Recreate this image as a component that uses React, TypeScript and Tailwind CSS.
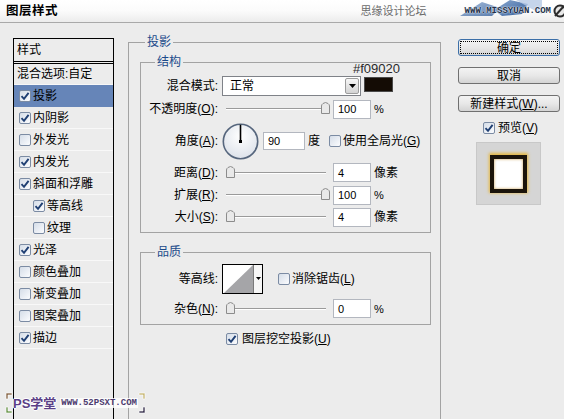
import React from 'react';

// Photoshop "图层样式" dialog

const styleRows: { t: string; on?: boolean; sel?: boolean; sub?: boolean }[] = [
  { t: '投影', on: true, sel: true },
  { t: '内阴影', on: true },
  { t: '外发光' },
  { t: '内发光', on: true },
  { t: '斜面和浮雕', on: true },
  { t: '等高线', on: true, sub: true },
  { t: '纹理', sub: true },
  { t: '光泽', on: true },
  { t: '颜色叠加' },
  { t: '渐变叠加' },
  { t: '图案叠加' },
  { t: '描边', on: true },
];

function Check({ on }: { on?: boolean }) {
  return (
    <span className="flex h-[12px] w-[12px] shrink-0 items-center justify-center rounded-[2px] border border-[#7b8ba3] bg-gradient-to-br from-[#d5dde8] to-[#fbfcfe]">
      {on && (
        <svg width="10" height="10" viewBox="0 0 10 10">
          <path d="M1.5 5.2 L4 7.8 L8.6 1.8" fill="none" stroke="#1f3f73" strokeWidth="1.9" />
        </svg>
      )}
    </span>
  );
}

function Slider({ value }: { value: number }) {
  const x = 8.5 + (95 * value) / 100;
  return (
    <svg width="108" height="16" viewBox="0 0 108 16" className="ml-[4px] shrink-0">
      <line x1="4" y1="7.5" x2="104" y2="7.5" stroke="#9a9a9a" />
      <line x1="4" y1="8.5" x2="104" y2="8.5" stroke="#ffffff" />
      <path
        d={`M${x - 4} 12.5 V5 Q${x - 4} 3.5 ${x - 2.5} 2.5 L${x} 1.5 L${x + 2.5} 2.5 Q${x + 4} 3.5 ${x + 4} 5 V12.5 Z`}
        fill="#e9e9e9"
        stroke="#8c8c8c"
      />
    </svg>
  );
}

function Field({ v, wide }: { v: string; wide?: boolean }) {
  return (
    <div
      className={`flex shrink-0 items-center border border-[#b3b7bf] bg-white pl-[4px] font-['Liberation_Sans',sans-serif] text-[11px] ${
        wide ? 'ml-[4px] h-[18px] w-[42px]' : 'ml-[3px] h-[19px] w-[38px]'
      }`}
    >
      {v}
    </div>
  );
}

function Label({ children }: { children: React.ReactNode }) {
  return <span className="w-[77px] shrink-0 text-right">{children}</span>;
}

function SliderRow({ label, value, text, unit, h }: { label: React.ReactNode; value: number; text: string; unit: string; h: string }) {
  return (
    <div className={`flex items-center ${h}`}>
      <Label>{label}</Label>
      <Slider value={value} />
      <Field v={text} />
      <span className={`ml-[3px] ${unit === '%' ? "font-['Liberation_Sans',sans-serif] text-[11px]" : ''}`}>{unit}</span>
    </div>
  );
}

function Btn({ children, focus }: { children: React.ReactNode; focus?: boolean }) {
  return (
    <div
      className={`flex h-[17px] w-[102px] items-center justify-center rounded-[3px] border bg-gradient-to-b from-[#f3f3f3] via-[#e8e8e8] to-[#d4d4d4] leading-none ${
        focus ? 'border-[#3c6fa8] outline outline-1 outline-dotted outline-black outline-offset-[-3px]' : 'border-[#707070]'
      }`}
    >
      {children}
    </div>
  );
}

export default function App() {
  return (
    <div className="relative h-[419px] w-[564px] overflow-hidden bg-[#ececec] font-['Liberation_Sans','Noto_Sans_CJK_SC',sans-serif] text-[12px] leading-[16px] text-black">
      {/* Title bar */}
      <div className="relative flex h-[23px] items-center border-b border-[#a9a9a9] bg-gradient-to-b from-white via-[#fbfbfb] to-[#ececec] pl-[6px]">
        <span className="text-[12.5px] font-bold leading-none tracking-[0.5px]">图层样式</span>
        <svg className="absolute right-[22px] top-0" width="86" height="22" viewBox="0 0 86 22">
          <defs>
            <linearGradient id="sky" x1="0" y1="0" x2="1" y2="1">
              <stop offset="0" stopColor="#8eabd2" />
              <stop offset="1" stopColor="#2f5b98" />
            </linearGradient>
          </defs>
          <path d="M4 16 L26 2 L44 8 L36 16 Z" fill="url(#sky)" opacity="0.8" />
          <path d="M38 10 L54 0 L72 4 L66 14 L46 16 Z" fill="url(#sky)" />
          <path d="M60 0 L86 0 L86 14 L74 8 Z" fill="#b7cbe6" opacity="0.8" />
        </svg>
        <div className="relative ml-auto flex items-center">
          <span className="text-[11px] leading-none text-[#6b6b6b]">思缘设计论坛</span>
          <span className="ml-[38px] font-['Liberation_Mono',monospace] text-[9px] font-bold leading-none text-[#24324a] [text-shadow:0_0_2px_#fff,0_0_1px_#fff]">
            WWW.MISSYUAN.COM
          </span>
          <svg className="ml-[1px]" width="12" height="16" viewBox="0 0 12 16">
            <circle cx="8" cy="8" r="5.5" fill="#e8e8e8" stroke="#2b2b2b" strokeWidth="2" />
            <line x1="3" y1="13" x2="12" y2="3" stroke="#2b2b2b" strokeWidth="2" />
          </svg>
        </div>
      </div>

      <div className="flex">
        {/* Style list */}
        <div className="ml-[13px] mt-[15px] h-[400px] w-[101px] shrink-0 border-x border-t border-black">
          <div className="flex h-[25px] items-center border-b-[3px] border-double border-black pl-[3px]">样式</div>
          <div className="flex h-[21px] items-center border-b border-[#f7f7f7] pl-[3px]">混合选项:自定</div>
          {styleRows.map((r) => (
            <div
              key={r.t}
              className={`flex h-[22px] items-center border-b ${r.sel ? 'border-[#6685b8] bg-[#6685b8]' : 'border-[#f8f8f8]'} ${
                r.sub ? 'pl-[19px]' : 'pl-[5px]'
              }`}
            >
              <Check on={r.on} />
              <span className="ml-[2px]">{r.t}</span>
            </div>
          ))}
        </div>

        {/* Drop shadow settings */}
        <fieldset className="ml-[14px] mt-[11px] h-[400px] w-[313px] shrink-0 border border-[#a3a3a3] pl-[11px] pr-[9px]">
          <legend className="ml-[5px] px-[2px] leading-[16px] text-[#1b4a8a]">投影</legend>

          <fieldset className="mt-[4px] border border-[#a3a3a3] pb-[4px] pt-[6px]">
            <legend className="ml-[14px] px-[2px] leading-[16px] text-[#1b4a8a]">结构</legend>

            <div className="flex h-[21px] items-start">
              <span className="mt-[2px] w-[77px] shrink-0 text-right">混合模式:</span>
              <div className="ml-[4px] flex h-[20px] w-[139px] items-center border border-[#7f8288] bg-white">
                <span className="flex-1 pl-[7px]">正常</span>
                <div className="mr-[1px] flex h-[16px] w-[14px] items-center justify-center rounded-[2px] border border-[#9c9c9c] bg-gradient-to-b from-[#f7f7f7] to-[#d3d3d3]">
                  <svg width="7" height="4" viewBox="0 0 7 4">
                    <path d="M0 0 H7 L3.5 4 Z" fill="#000" />
                  </svg>
                </div>
              </div>
              <div className="ml-[3px] mt-[1px] h-[15px] w-[29px] border border-[#4a4a4a] bg-[#140c05]" />
            </div>

            <SliderRow label={<>不透明度(<u>O</u>):</>} value={100} text="100" unit="%" h="h-[24px]" />

            <div className="flex h-[40px] items-center">
              <Label>
                角度(<u>A</u>):
              </Label>
              <svg className="ml-[4px] shrink-0" width="37" height="37" viewBox="0 0 37 37">
                <defs>
                  <radialGradient id="dial" cx="50%" cy="35%" r="65%">
                    <stop offset="0" stopColor="#ffffff" />
                    <stop offset="1" stopColor="#dde2ea" />
                  </radialGradient>
                </defs>
                <circle cx="18.5" cy="18.5" r="17.2" fill="url(#dial)" stroke="#56667d" strokeWidth="1.6" />
                <line x1="18.5" y1="18.5" x2="18.5" y2="1.8" stroke="#000" strokeWidth="1.6" />
                <rect x="17" y="17" width="3" height="3" fill="#000" />
              </svg>
              <Field v="90" wide />
              <span className="ml-[3px]">度</span>
              <span className="ml-[9px]">
                <Check />
              </span>
              <span className="ml-[2px]">
                使用全局光(<u>G</u>)
              </span>
            </div>

            <SliderRow label={<>距离(<u>D</u>):</>} value={0} text="4" unit="像素" h="h-[23px]" />
            <SliderRow label={<>扩展(<u>R</u>):</>} value={100} text="100" unit="%" h="h-[22px]" />
            <SliderRow label={<>大小(<u>S</u>):</>} value={0} text="4" unit="像素" h="h-[22px]" />
          </fieldset>

          <fieldset className="mt-[11px] border border-[#a3a3a3] pb-[1px] pt-[3px]">
            <legend className="ml-[14px] px-[2px] leading-[16px] text-[#1b4a8a]">品质</legend>
            <div className="flex h-[31px] items-center">
              <Label>等高线:</Label>
              <div className="ml-[4px] flex h-[30px] w-[41px] shrink-0 border border-black bg-white">
                <svg width="30" height="28" viewBox="0 0 30 28">
                  <polygon points="1,28 30,0 30,28" fill="#a5a5a8" />
                </svg>
                <div className="flex flex-1 items-center justify-center border-l border-[#7a7a7a] bg-[#f6f6f6]">
                  <svg width="5" height="3" viewBox="0 0 5 3">
                    <path d="M0 0 H5 L2.5 3 Z" fill="#000" />
                  </svg>
                </div>
              </div>
              <span className="ml-[15px]">
                <Check />
              </span>
              <span className="ml-[2px]">
                消除锯齿(<u>L</u>)
              </span>
            </div>
            <SliderRow label={<>杂色(<u>N</u>):</>} value={0} text="0" unit="%" h="h-[29px]" />
          </fieldset>

          <div className="mt-[6px] flex h-[16px] items-center pl-[86px]">
            <Check on />
            <span className="ml-[4px]">
              图层挖空投影(<u>U</u>)
            </span>
          </div>
        </fieldset>

        {/* Buttons and preview */}
        <div className="ml-[17px] mt-[16px] flex flex-col">
          <div className="flex flex-col gap-[11px]">
            <Btn focus>确定</Btn>
            <Btn>取消</Btn>
            <Btn>
              新建样式(<u>W</u>)...
            </Btn>
          </div>
          <div className="mt-[8px] flex h-[16px] items-center pl-[25px]">
            <Check on />
            <span className="ml-[3px]">
              预览(<u>V</u>)
            </span>
          </div>
          <div className="ml-[18px] mt-[6px] flex h-[63px] w-[65px] items-center justify-center border border-[#c8c8c8] bg-[#d5d5d5]">
            <div className="h-[38px] w-[37px] border-[4px] border-[#1b140a] bg-white shadow-[0_-1px_3px_1px_#e6b840,inset_0_0_3px_#c9a050]" />
          </div>
        </div>
      </div>

      {/* Tutorial annotation */}
      <span className="absolute left-[353px] top-[61px] font-['Liberation_Sans',sans-serif] text-[13px] leading-[16px] text-[#2a2a2a]">#f09020</span>

      {/* Bottom-left watermark */}
      <div className="absolute left-[5px] top-[392px] flex h-[22px] items-center">
        <svg className="absolute left-0 top-0" width="142" height="22" viewBox="0 0 142 22">
          <path d="M1 7 V1 H7 V3 H3 V7 Z" fill="#8b6a4c" stroke="#fff" strokeWidth="0.6" />
          <path d="M1 15 V21 H7 V19 H3 V15 Z" fill="#6f9a52" stroke="#fff" strokeWidth="0.6" />
          <path d="M134 1 H140 V7 H138 V3 H134 Z" fill="#c9b97a" stroke="#fff" strokeWidth="0.6" />
          <path d="M140 15 V21 H134 V19 H138 V15 Z" fill="#3d3552" stroke="#fff" strokeWidth="0.6" />
        </svg>
        <span className="ml-[8px] text-[13px] font-bold leading-none text-[#5b3f86] [text-shadow:1px_0_0_#fff,-1px_0_0_#fff,0_1px_0_#fff,0_-1px_0_#fff]">
          PS学堂
        </span>
        <span className="ml-[4px] bg-white/80 px-[1px] font-['Liberation_Mono',monospace] text-[9px] font-bold leading-[10px] text-[#4b3a6e]">
          WWW.52PSXT.COM
        </span>
      </div>
    </div>
  );
}
